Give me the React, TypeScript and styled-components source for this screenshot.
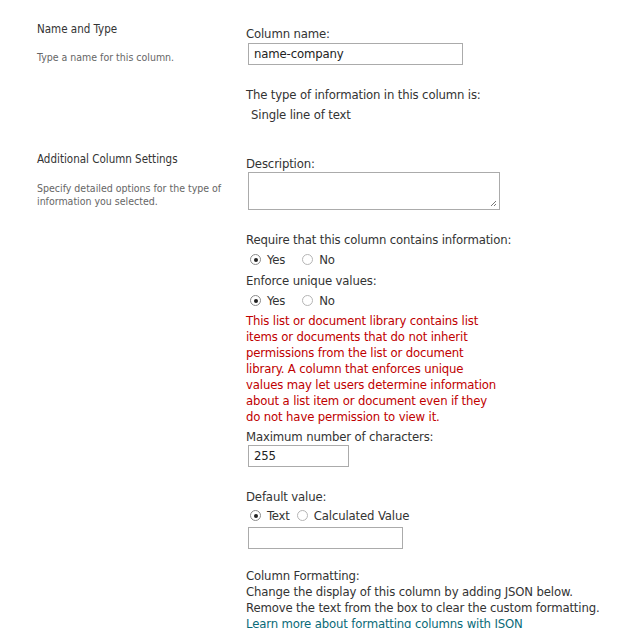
import React from 'react';
import styled, { createGlobalStyle } from 'styled-components';

const GlobalStyle = createGlobalStyle`
  html, body {
    margin: 0;
    padding: 0;
    background: #fff;
  }
  body {
    font-family: "DejaVu Sans Condensed", "DejaVu Sans", sans-serif;
    color: #333;
  }
`;

const Page = styled.div`
  padding: 21px 0 0 37px;
  width: 589px;
`;

const Section = styled.div<{ $bottom?: number }>`
  display: grid;
  grid-template-columns: 209px 1fr;
  padding-bottom: ${(p) => p.$bottom ?? 0}px;
`;

const Side = styled.div`
  display: flex;
  flex-direction: column;
`;

const SideTitle = styled.div`
  font-size: 11.5px;
  line-height: 16px;
  color: #333;
`;

const SideText = styled.div<{ $top: number }>`
  margin-top: ${(p) => p.$top}px;
  font-size: 10.5px;
  line-height: 13px;
  color: #666;
  width: 190px;
`;

const Body = styled.div`
  display: flex;
  flex-direction: column;
  align-items: flex-start;
  padding-top: 5px;
  font-size: 13px;
  line-height: 16px;
  letter-spacing: -0.15px;
  color: #333;
`;

const Label = styled.div<{ $top?: number }>`
  margin-top: ${(p) => p.$top ?? 0}px;
`;

const Value = styled.div<{ $top?: number }>`
  margin-top: ${(p) => p.$top ?? 0}px;
  padding-left: 5px;
`;

const Field = styled.div<{ $top?: number; $width: number }>`
  box-sizing: border-box;
  margin: ${(p) => p.$top ?? 0}px 0 0 2px;
  width: ${(p) => p.$width}px;
  height: 22px;
  border: 1px solid #ababab;
  padding: 0 5px;
  line-height: 20px;
  color: #222;
`;

const TextArea = styled.div`
  position: relative;
  box-sizing: border-box;
  margin: 0 0 0 2px;
  width: 252px;
  height: 38px;
  border: 1px solid #ababab;
`;

const Grip = styled.svg`
  position: absolute;
  right: 2px;
  bottom: 2px;
`;

const RadioRow = styled.div<{ $top?: number }>`
  display: flex;
  align-items: center;
  height: 21px;
  margin-top: ${(p) => p.$top ?? 0}px;
  padding-left: 4px;
`;

const RadioItem = styled.label<{ $gap: number }>`
  display: flex;
  align-items: center;
  gap: 6px;
  margin-right: ${(p) => p.$gap}px;
`;

const Circle = styled.span<{ $on?: boolean }>`
  box-sizing: border-box;
  width: 11px;
  height: 11px;
  border-radius: 50%;
  border: 1px solid ${(p) => (p.$on ? '#8a8a8a' : '#b5b5b5')};
  background: #fff;
  display: flex;
  align-items: center;
  justify-content: center;

  &::after {
    content: '';
    display: ${(p) => (p.$on ? 'block' : 'none')};
    width: 4px;
    height: 4px;
    border-radius: 50%;
    background: #222;
  }
`;

const Warning = styled.div`
  margin-top: 2px;
  width: 255px;
  color: #c00000;
`;

const Link = styled.a`
  color: #0a6a78;
  text-decoration: none;
`;

type Option = { label: string; on?: boolean; gap: number };

const Radios: React.FC<{ options: Option[]; top?: number }> = ({ options, top }) => (
  <RadioRow $top={top}>
    {options.map((o) => (
      <RadioItem key={o.label} $gap={o.gap}>
        <Circle $on={o.on} />
        {o.label}
      </RadioItem>
    ))}
  </RadioRow>
);

export default function App() {
  return (
    <>
      <GlobalStyle />
      <Page>
        <Section $bottom={28}>
          <Side>
            <SideTitle>Name and Type</SideTitle>
            <SideText $top={14}>Type a name for this column.</SideText>
          </Side>
          <Body>
            <Label>Column name:</Label>
            <Field $top={1} $width={215}>name-company</Field>
            <Label $top={22}>The type of information in this column is:</Label>
            <Value $top={4}>Single line of text</Value>
          </Body>
        </Section>
        <Section>
          <Side>
            <SideTitle>Additional Column Settings</SideTitle>
            <SideText $top={15}>
              Specify detailed options for the type of information you selected.
            </SideText>
          </Side>
          <Body>
            <Label>Description:</Label>
            <TextArea>
              <Grip width="7" height="7" viewBox="0 0 7 7">
                <path d="M6 1L1 6M6 4L4 6" stroke="#777" strokeWidth="1" />
              </Grip>
            </TextArea>
            <Label $top={22}>Require that this column contains information:</Label>
            <Radios
              top={1}
              options={[
                { label: 'Yes', on: true, gap: 17 },
                { label: 'No', gap: 0 },
              ]}
            />
            <Label $top={3}>Enforce unique values:</Label>
            <Radios
              top={1}
              options={[
                { label: 'Yes', on: true, gap: 17 },
                { label: 'No', gap: 0 },
              ]}
            />
            <Warning>
              This list or document library contains list items or documents that do not
              inherit permissions from the list or document library. A column that enforces
              unique values may let users determine information about a list item or
              document even if they do not have permission to view it.
            </Warning>
            <Label $top={4}>Maximum number of characters:</Label>
            <Field $top={0} $width={101}>255</Field>
            <Label $top={22}>Default value:</Label>
            <Radios
              top={0}
              options={[
                { label: 'Text', on: true, gap: 7 },
                { label: 'Calculated Value', gap: 0 },
              ]}
            />
            <Field $top={1} $width={155} />
            <Label $top={19}>Column Formatting:</Label>
            <Label>Change the display of this column by adding JSON below.</Label>
            <Label>Remove the text from the box to clear the custom formatting.</Label>
            <Link href="#">Learn more about formatting columns with JSON</Link>
          </Body>
        </Section>
      </Page>
    </>
  );
}
